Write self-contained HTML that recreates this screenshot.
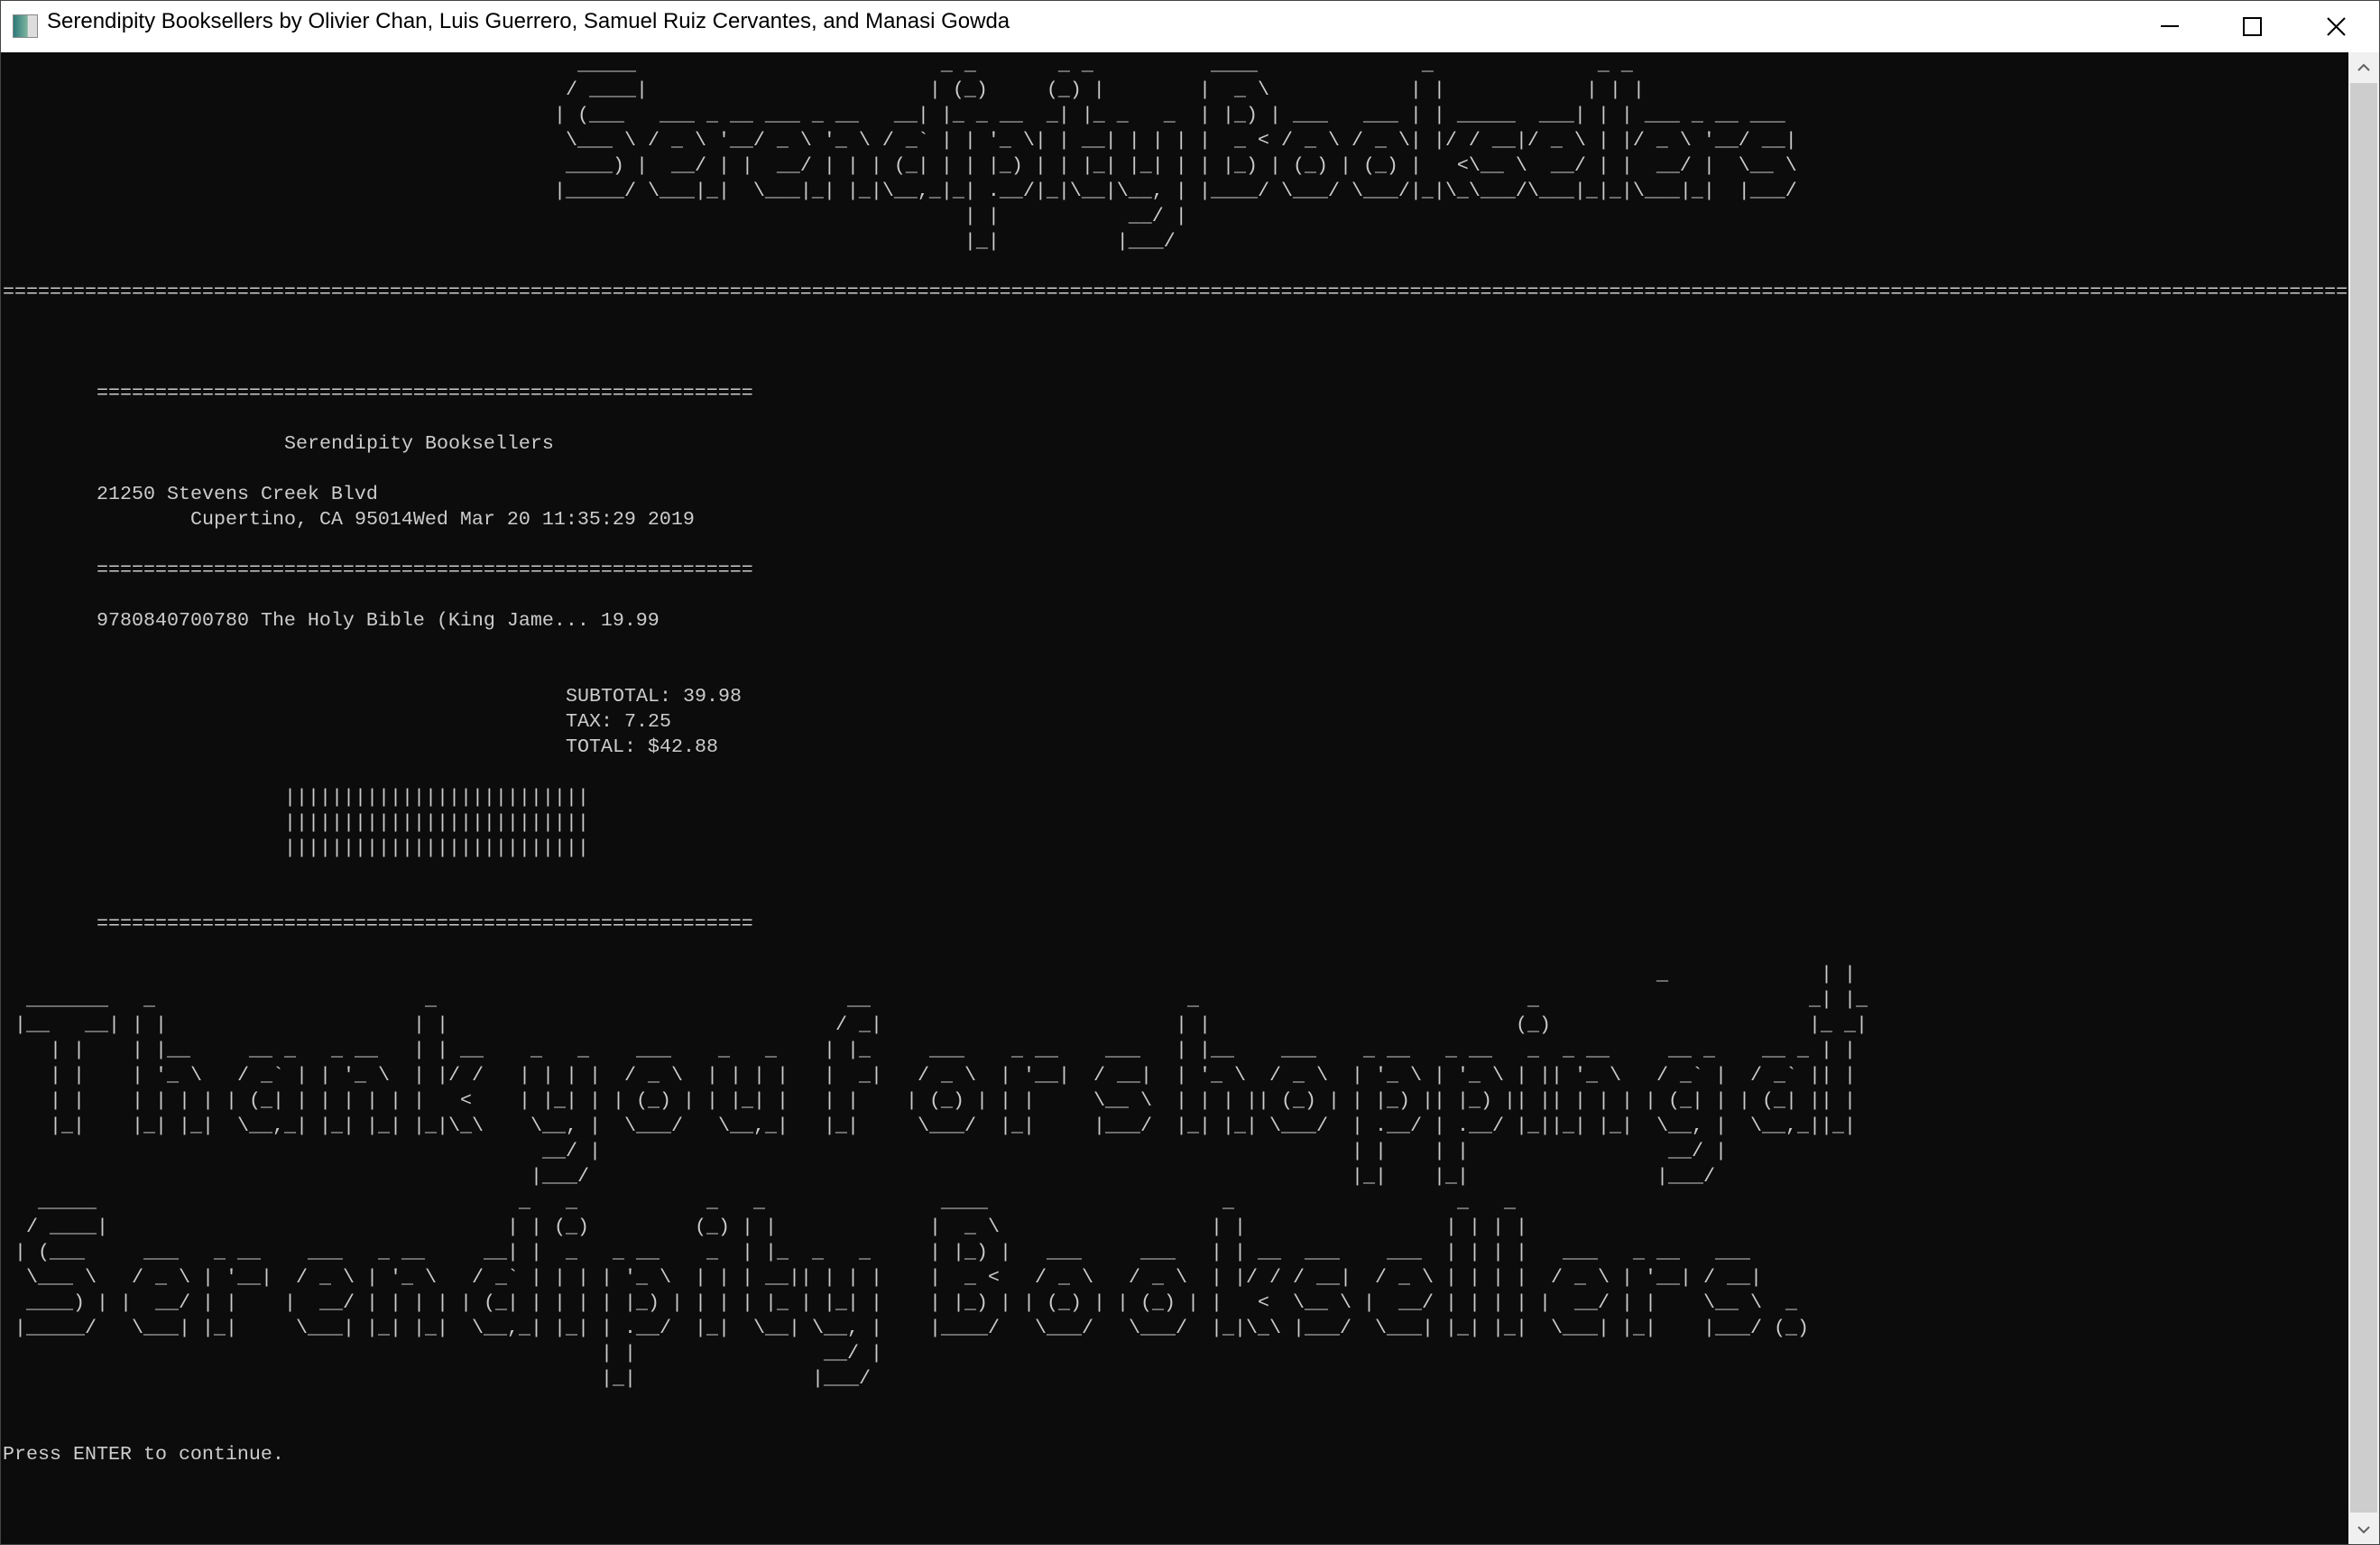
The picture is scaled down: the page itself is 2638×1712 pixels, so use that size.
<!DOCTYPE html>
<html><head><meta charset="utf-8">
<style>
html,body{margin:0;padding:0;}
body{width:2638px;height:1712px;background:#0c0c0c;position:relative;overflow:hidden;}
.tb{position:absolute;left:0;top:0;width:2638px;height:58px;background:#fff;}
.tt{position:absolute;left:52px;top:10px;font-family:"Liberation Sans",sans-serif;font-size:24px;color:#000;white-space:nowrap;}
.ic{position:absolute;left:14px;top:16px;width:26px;height:24px;border:1px solid #888;background:linear-gradient(90deg,#2d7a7a,#7fb5a0 60%,#ddd 61%);}
.bd{position:absolute;left:0;top:0;width:2638px;height:1712px;box-sizing:border-box;border:1px solid #444;pointer-events:none;}
.g,.l{position:absolute;margin:0;font-family:"Liberation Mono",monospace;font-size:21.67px;line-height:28px;color:#cccccc;white-space:pre;}
.sb{position:absolute;left:2603px;top:58px;width:34px;height:1654px;background:#f0f0f0;}
.th{position:absolute;left:2605px;top:92px;width:30px;height:1584px;background:#cdcdcd;}
</style></head><body>
<div class="tb"><div class="ic"></div><div class="tt">Serendipity Booksellers by Olivier Chan, Luis Guerrero, Samuel Ruiz Cervantes, and Manasi Gowda</div>
<svg style="position:absolute;left:2380px;top:10px" width="240" height="40"><line x1="15" y1="19" x2="35" y2="19" stroke="#000" stroke-width="2"/><rect x="107" y="10" width="19" height="19" fill="none" stroke="#000" stroke-width="2"/><line x1="200" y1="10" x2="219" y2="29" stroke="#000" stroke-width="2"/><line x1="219" y1="10" x2="200" y2="29" stroke="#000" stroke-width="2"/></svg>
</div>
<div class="sb"></div><div class="th"></div>
<svg style="position:absolute;left:2603px;top:58px" width="34" height="34"><polyline points="11,20 17,14 23,20" fill="none" stroke="#606060" stroke-width="2"/></svg>
<svg style="position:absolute;left:2603px;top:1678px" width="34" height="34"><polyline points="11,14 17,20 23,14" fill="none" stroke="#606060" stroke-width="2"/></svg>

<pre class="g" style="left:614px;top:58px">
  _____                          _ _       _ _
 / ____|                        | (_)     (_) |
| (___   ___ _ __ ___ _ __   __| |_ _ __  _| |_ _   _
 \___ \ / _ \ '__/ _ \ '_ \ / _` | | '_ \| | __| | | |
 ____) |  __/ | |  __/ | | | (_| | | |_) | | |_| |_| |
|_____/ \___|_|  \___|_| |_|\__,_|_| .__/|_|\__|\__, |
                                   | |           __/ |
                                   |_|          |___/</pre>
<pre class="g" style="left:1329px;top:58px">
 ____              _              _ _
|  _ \            | |            | | |
| |_) | ___   ___ | | _____  ___| | | ___ _ __ ___
|  _ &lt; / _ \ / _ \| |/ / __|/ _ \ | |/ _ \ '__/ __|
| |_) | (_) | (_) |   &lt;\__ \  __/ | |  __/ |  \__ \
|____/ \___/ \___/|_|\_\___/\___|_|_|\___|_|  |___/</pre>

<pre class="l" style="left:3px;top:310px">========================================================================================================================================================================================================</pre>
<pre class="l" style="left:107px;top:422px">========================================================</pre>
<pre class="l" style="left:315px;top:478px">Serendipity Booksellers</pre>
<pre class="l" style="left:107px;top:534px">21250 Stevens Creek Blvd</pre>
<pre class="l" style="left:211px;top:562px">Cupertino, CA 95014Wed Mar 20 11:35:29 2019</pre>
<pre class="l" style="left:107px;top:618px">========================================================</pre>
<pre class="l" style="left:107px;top:674px">9780840700780 The Holy Bible (King Jame... 19.99</pre>
<pre class="l" style="left:627px;top:758px">
SUBTOTAL: 39.98
TAX: 7.25
TOTAL: $42.88</pre>
<pre class="l" style="left:315px;top:870px">
||||||||||||||||||||||||||
||||||||||||||||||||||||||
||||||||||||||||||||||||||</pre>
<pre class="l" style="left:107px;top:1010px">========================================================</pre>

<pre class="g" style="left:16px;top:1094px">
 _______
|__   __|
   | |
   | |
   | |
   |_|</pre>
<pre class="g" style="left:146px;top:1094px">
 _
| |
| |__
| '_ \
| | | |
|_| |_|</pre>
<pre class="g" style="left:250px;top:1094px">


  __ _
 / _` |
| (_| |
 \__,_|</pre>
<pre class="g" style="left:354px;top:1094px">


 _ __
| '_ \
| | | |
|_| |_|</pre>
<pre class="g" style="left:458px;top:1094px">
 _
| |
| | __
| |/ /
|   &lt;
|_|\_\</pre>
<pre class="g" style="left:575px;top:1094px">


 _   _
| | | |
| |_| |
 \__, |
  __/ |
 |___/</pre>
<pre class="g" style="left:679px;top:1094px">


  ___
 / _ \
| (_) |
 \___/</pre>
<pre class="g" style="left:783px;top:1094px">


 _   _
| | | |
| |_| |
 \__,_|</pre>
<pre class="g" style="left:913px;top:1094px">
  __
 / _|
| |_
|  _|
| |
|_|</pre>
<pre class="g" style="left:1004px;top:1094px">


  ___
 / _ \
| (_) |
 \___/</pre>
<pre class="g" style="left:1108px;top:1094px">


 _ __
| '__|
| |
|_|</pre>
<pre class="g" style="left:1212px;top:1094px">


 ___
/ __|
\__ \
|___/</pre>
<pre class="g" style="left:1303px;top:1094px">
 _
| |
| |__
| '_ \
| | | |
|_| |_|</pre>
<pre class="g" style="left:1394px;top:1094px">


  ___
 / _ \
| (_) |
 \___/</pre>
<pre class="g" style="left:1498px;top:1094px">


 _ __
| '_ \
| |_) |
| .__/
| |
|_|</pre>
<pre class="g" style="left:1589px;top:1094px">


 _ __
| '_ \
| |_) |
| .__/
| |
|_|</pre>
<pre class="g" style="left:1680px;top:1094px">
 _
(_)
 _
| |
| |
|_|</pre>
<pre class="g" style="left:1719px;top:1094px">


 _ __
| '_ \
| | | |
|_| |_|</pre>
<pre class="g" style="left:1823px;top:1094px">


  __ _
 / _` |
| (_| |
 \__, |
  __/ |
 |___/</pre>
<pre class="g" style="left:1927px;top:1094px">


  __ _
 / _` |
| (_| |
 \__,_|</pre>
<pre class="g" style="left:1836px;top:1066px">_</pre>
<pre class="g" style="left:2005px;top:1066px">
 | |
_| |_
|_ _|
 | |
 | |
 | |
 |_|</pre>

<pre class="g" style="left:16px;top:1318px">
  _____
 / ____|
| (___
 \___ \
 ____) |
|_____/</pre>
<pre class="g" style="left:133px;top:1318px">


  ___
 / _ \
|  __/
 \___|</pre>
<pre class="g" style="left:224px;top:1318px">


 _ __
| '__|
| |
|_|</pre>
<pre class="g" style="left:315px;top:1318px">


  ___
 / _ \
|  __/
 \___|</pre>
<pre class="g" style="left:406px;top:1318px">


 _ __
| '_ \
| | | |
|_| |_|</pre>
<pre class="g" style="left:510px;top:1318px">
     _
    | |
  __| |
 / _` |
| (_| |
 \__,_|</pre>
<pre class="g" style="left:614px;top:1318px">
 _
(_)
 _
| |
| |
|_|</pre>
<pre class="g" style="left:666px;top:1318px">


 _ __
| '_ \
| |_) |
| .__/
| |
|_|</pre>
<pre class="g" style="left:770px;top:1318px">
 _
(_)
 _
| |
| |
|_|</pre>
<pre class="g" style="left:822px;top:1318px">
 _
| |
| |_
| __|
| |_
 \__|</pre>
<pre class="g" style="left:887px;top:1318px">


 _   _
| | | |
| |_| |
 \__, |
  __/ |
 |___/</pre>
<pre class="g" style="left:1030px;top:1318px">
 ____
|  _ \
| |_) |
|  _ &lt;
| |_) |
|____/</pre>
<pre class="g" style="left:1134px;top:1318px">


  ___
 / _ \
| (_) |
 \___/</pre>
<pre class="g" style="left:1238px;top:1318px">


  ___
 / _ \
| (_) |
 \___/</pre>
<pre class="g" style="left:1342px;top:1318px">
 _
| |
| | __
| |/ /
|   &lt;
|_|\_\</pre>
<pre class="g" style="left:1433px;top:1318px">


 ___
/ __|
\__ \
|___/</pre>
<pre class="g" style="left:1511px;top:1318px">


  ___
 / _ \
|  __/
 \___|</pre>
<pre class="g" style="left:1602px;top:1318px">
 _
| |
| |
| |
| |
|_|</pre>
<pre class="g" style="left:1654px;top:1318px">
 _
| |
| |
| |
| |
|_|</pre>
<pre class="g" style="left:1706px;top:1318px">


  ___
 / _ \
|  __/
 \___|</pre>
<pre class="g" style="left:1797px;top:1318px">


 _ __
| '__|
| |
|_|</pre>
<pre class="g" style="left:1888px;top:1318px">


 ___
/ __|
\__ \
|___/</pre>
<pre class="g" style="left:1966px;top:1318px">




 _
(_)</pre>

<pre class="l" style="left:3px;top:1598px">Press ENTER to continue.</pre>
<div class="bd"></div>
</body></html>
